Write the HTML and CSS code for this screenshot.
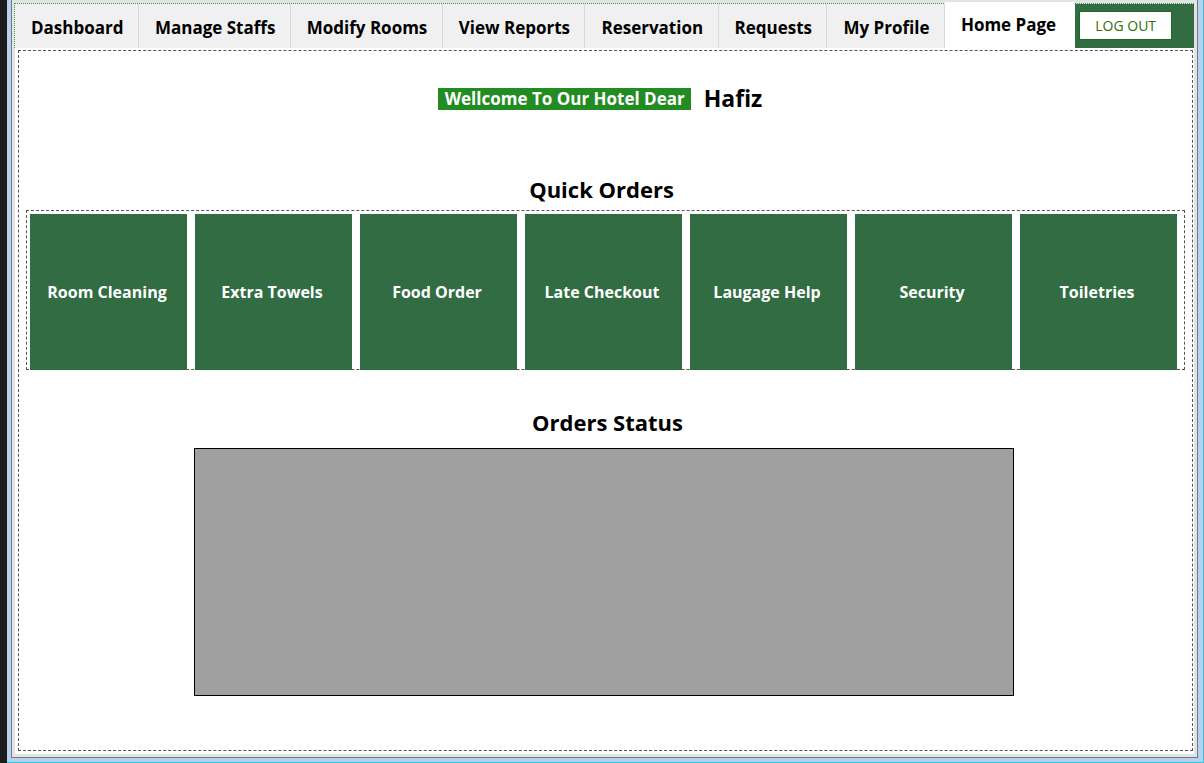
FILE: index.html
```html
<!DOCTYPE html>
<html>
<head>
<meta charset="utf-8">
<title>Home Page</title>
<link rel="stylesheet" href="styles.css">
</head>
<body>
<div class="screen">
  <div class="dark-strip"></div>
  <div class="window">
    <div class="frame">
      <div class="tabbar">
        <div class="tab">Dashboard</div>
        <div class="tab">Manage Staffs</div>
        <div class="tab">Modify Rooms</div>
        <div class="tab">View Reports</div>
        <div class="tab">Reservation</div>
        <div class="tab">Requests</div>
        <div class="tab">My Profile</div>
        <div class="tab tab-active">Home Page</div>
        <div class="logout-area"><button class="logout">LOG OUT</button></div>
      </div>
      <div class="panel">
        <div class="panel-inner">
          <div class="welcome-row">
            <span class="welcome">Wellcome To Our Hotel Dear</span>
            <span class="username">Hafiz</span>
          </div>
          <h2 class="section-title quick-title">Quick Orders</h2>
          <div class="quick-box">
            <div class="tile">Room Cleaning</div>
            <div class="tile">Extra Towels</div>
            <div class="tile">Food Order</div>
            <div class="tile">Late Checkout</div>
            <div class="tile">Laugage Help</div>
            <div class="tile">Security</div>
            <div class="tile">Toiletries</div>
          </div>
          <h2 class="section-title status-title">Orders Status</h2>
          <div class="status-box"></div>
        </div>
      </div>
    </div>
  </div>
</div>
</body>
</html>
```

FILE: styles.css
```css
* { box-sizing: border-box; }
html, body {
  margin: 0;
  padding: 0;
  width: 1204px;
  height: 763px;
  overflow: hidden;
}
body {
  font-family: "Open Sans", "Noto Sans", sans-serif;
  background: #b9d1ea;
}
.screen {
  display: flex;
  width: 1204px;
  height: 763px;
}
.dark-strip {
  width: 7px;
  background: #1c1c1c;
  flex: none;
}
.window {
  flex: 1;
  background: #b9d1ea;
  border-right: 1px solid #2fc4e4;
  border-bottom: 1px solid #2fc4e4;
  padding: 0 5px 4px 4px;
  display: flex;
}
.frame {
  flex: 1;
  border: 1px solid #6e7a88;
  border-top: none;
  background: #e3e3e3;
  padding: 3px 3px 3px 3px;
  display: flex;
  flex-direction: column;
}
.tabbar {
  display: flex;
  height: 45px;
  margin-left: -1px;
  border-top: 1px dotted #3a9a4a;
  border-left: 1px dotted #3a9a4a;
  background: #f0f0f0;
  flex: none;
}
.tab {
  height: 44px;
  padding: 12px 14.4px 0 16px;
  font-size: 17px;
  font-weight: 700;
  color: #000;
  background: #f0f0f0;
  border-right: 1px solid #d9d9d9;
  white-space: nowrap;
  line-height: 24px;
}
.tab-active {
  background: #fff;
  margin-top: -2px;
  height: 46px;
  padding-top: 11px;
  border-right: none;
  padding-left: 16px;
  padding-right: 19px;
}
.logout-area {
  flex: 1;
  background: #316c42;
  padding: 7px 0 0 4px;
}
.logout {
  width: 93px;
  height: 29px;
  background: #fff;
  border: 1px solid #1d6b1d;
  color: #356d0a;
  font-family: "Open Sans", "Noto Sans", sans-serif;
  font-size: 14px;
  padding: 0;
}
.panel {
  flex: 1;
  background: #fff;
  padding: 2px 1px 3px 3px;
  display: flex;
}
.panel-inner {
  flex: 1;
  border: 1px dashed #555;
  display: flex;
  flex-direction: column;
  align-items: center;
}
.welcome-row {
  margin-top: 33px;
  margin-right: 11px;
  display: flex;
  align-items: center;
  gap: 13px;
  height: 28px;
}
.welcome {
  background: #228b22;
  color: #fff;
  font-size: 17px;
  font-weight: 700;
  line-height: 22px;
  height: 22px;
  padding: 0 6px 0 7px;
  margin-top: 1px;
}
.username {
  font-size: 23px;
  font-weight: 700;
  line-height: 28px;
  color: #000;
}
.section-title {
  margin: 0;
  font-size: 22px;
  font-weight: 700;
  line-height: 30px;
  color: #000;
}
.quick-title {
  margin-top: 62px;
  margin-right: 8px;
}
.quick-box {
  align-self: stretch;
  margin: 6px 7px 0 7px;
  border: 1px dashed #555;
  padding: 3px 6px 0 3px;
  display: flex;
  gap: 8px;
  height: 160px;
}
.tile {
  width: 157px;
  height: 156px;
  flex: none;
  background: #316c42;
  color: #fff;
  font-size: 16px;
  font-weight: 700;
  display: flex;
  align-items: center;
  justify-content: center;
  text-align: center;
  padding-right: 3px;
  position: relative;
  z-index: 1;
}
.status-title {
  margin-top: 37px;
  padding-left: 4px;
}
.status-box {
  margin-top: 11px;
  margin-right: 4px;
  width: 820px;
  height: 248px;
  background: #a0a0a0;
  border: 1px solid #000;
}
```
